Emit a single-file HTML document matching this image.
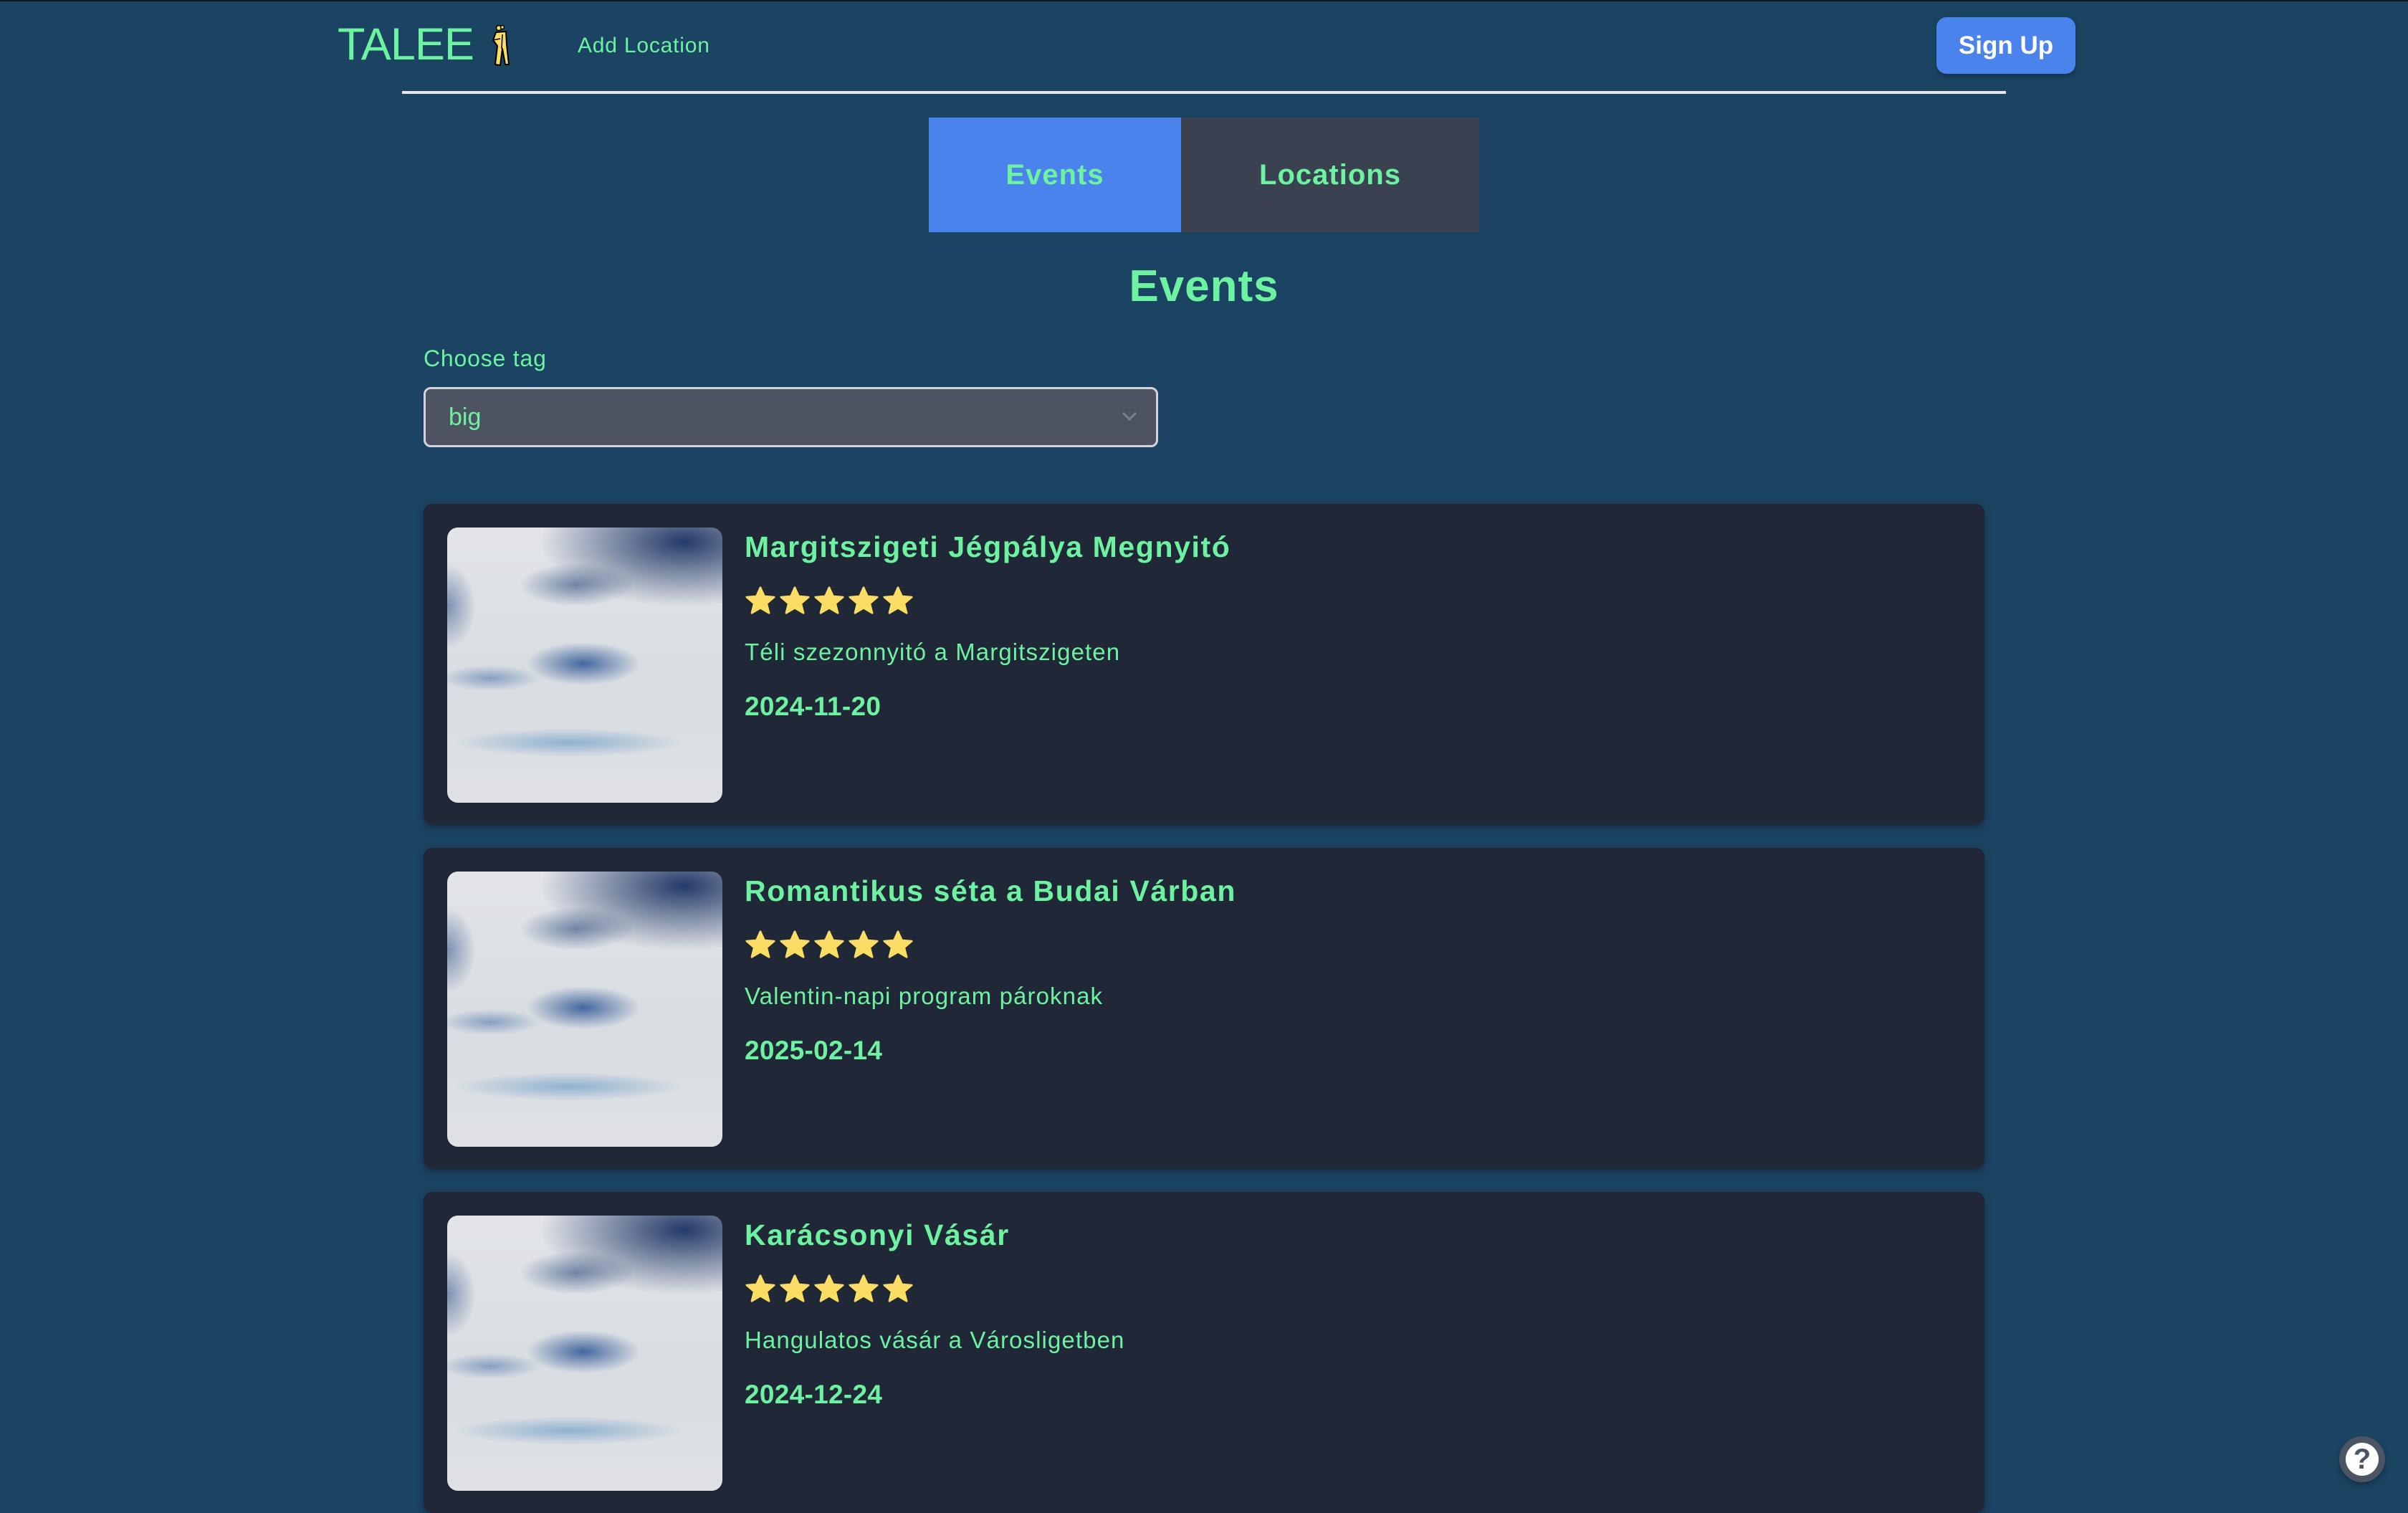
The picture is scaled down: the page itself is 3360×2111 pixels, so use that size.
<!DOCTYPE html>
<html><head><meta charset="utf-8"><style>
*{margin:0;padding:0;box-sizing:border-box}
body{width:3360px;height:2100px;background:#1b4463;font-family:"Liberation Sans",sans-serif;color:#6cf2a0;position:relative;overflow:hidden}
.abs{position:absolute}
.top{left:0;top:0;width:3360px;height:2px;background:#0c1a26}
.logo{left:471px;top:24px;font-size:63px;letter-spacing:-1px;line-height:76px}
.add{left:806px;top:46px;font-size:30px;letter-spacing:0.8px;line-height:36px}
.btn{left:2702px;top:24px;width:194px;height:79px;background:#4b83ec;border-radius:14px;color:#fff;font-weight:bold;font-size:35px;line-height:79px;text-align:center;box-shadow:0 4px 8px rgba(0,0,0,.25)}
.line{left:561px;top:127px;width:2238px;height:4px;background:#e5e7eb}
.tab{top:164px;height:160px;font-weight:bold;font-size:40px;letter-spacing:1px;line-height:160px;text-align:center}
h1{position:absolute;left:0;width:3360px;text-align:center;top:362px;font-size:62px;letter-spacing:1px;line-height:76px}
.lbl{left:591px;top:480px;font-size:32px;letter-spacing:0.8px;line-height:40px}
.sel{left:591px;top:540px;width:1025px;height:84px;background:#4d5360;border:3px solid #d1d5db;border-radius:10px;font-size:34px;line-height:78px;padding-left:32px}
.card{left:591px;width:2178px;height:448px;background:#202736;border-radius:12px;box-shadow:0 4px 10px rgba(0,0,0,.3)}
.img{position:absolute;left:33px;top:33px;width:384px;height:384px;border-radius:15px;overflow:hidden;
background:
radial-gradient(ellipse 80px 30px at 190px 190px,rgba(50,90,150,.9),rgba(50,90,150,0)),
radial-gradient(ellipse 70px 18px at 60px 210px,rgba(80,120,170,.6),rgba(80,120,170,0)),
radial-gradient(ellipse 160px 20px at 170px 300px,rgba(80,140,190,.55),rgba(80,140,190,0)),
radial-gradient(ellipse 200px 90px at 330px 20px,#233a68,rgba(35,58,104,0)),
radial-gradient(ellipse 80px 30px at 180px 80px,rgba(40,70,120,.6),rgba(40,70,120,0)),
radial-gradient(ellipse 40px 60px at 0px 110px,rgba(60,90,140,.6),rgba(60,90,140,0)),
linear-gradient(#e2e4e8,#d8dde2 60%,#dfe1e4)}
.t{position:absolute;left:448px;top:34px;font-weight:bold;font-size:41px;letter-spacing:1.6px;line-height:52px}
.stars{position:absolute;left:448px;top:114px;display:flex;gap:4px}
.d{position:absolute;left:448px;top:186px;font-size:33px;letter-spacing:1.1px;line-height:42px}
.dt{position:absolute;left:448px;top:260px;font-weight:bold;font-size:37px;letter-spacing:0.3px;line-height:46px}
</style></head><body>
<div class="abs top"></div>
<div class="abs logo">TALEE</div>
<svg class="abs" style="left:684px;top:34px" width="32" height="60" viewBox="0 0 32 60"><circle cx="12" cy="5" r="3.5" fill="#fbdd63" stroke="#000" stroke-width="1.5"/><circle cx="17" cy="4" r="2.5" fill="#fbdd63" stroke="#000" stroke-width="1.5"/><path d="M8 11 L22 10 L23 28 L26 56 L21 56 L17 34 L14 57 L7 56 L10 30 L4 22 Z" fill="#fbdd63" stroke="#000" stroke-width="2" stroke-linejoin="round"/><path d="M17 14 L16 34 M4 22 L14 20" stroke="#000" stroke-width="1.5" fill="none"/></svg>
<div class="abs add">Add Location</div>
<div class="abs btn">Sign Up</div>
<div class="abs line"></div>
<div class="abs tab" style="left:1296px;width:352px;background:#4b83ec">Events</div>
<div class="abs tab" style="left:1648px;width:416px;background:#3a4150">Locations</div>
<h1>Events</h1>
<div class="abs lbl">Choose tag</div>
<div class="abs sel">big<svg style="position:absolute;right:26px;top:30px" width="22" height="16" viewBox="0 0 22 16"><path d="M2 3 L11 12 L20 3" stroke="#7a808c" stroke-width="3" fill="none"/></svg></div>

<div class="abs card" style="top:703px"><div class="img"></div><div class="t">Margitszigeti Jégpálya Megnyitó</div>
<div class="stars">★★★★★</div>
<div class="d">Téli szezonnyitó a Margitszigeten</div><div class="dt">2024-11-20</div></div>
<div class="abs card" style="top:1183px"><div class="img"></div><div class="t">Romantikus séta a Budai Várban</div>
<div class="stars">★★★★★</div>
<div class="d">Valentin-napi program pároknak</div><div class="dt">2025-02-14</div></div>
<div class="abs card" style="top:1663px"><div class="img"></div><div class="t">Karácsonyi Vásár</div>
<div class="stars">★★★★★</div>
<div class="d">Hangulatos vásár a Városligetben</div><div class="dt">2024-12-24</div></div>

<div class="abs" style="left:3264px;top:2004px;width:64px;height:64px;border-radius:50%;background:#4b5563;box-shadow:0 4px 8px rgba(0,0,0,.3)"><div style="position:absolute;left:9px;top:9px;width:46px;height:46px;border-radius:50%;background:#fff;color:#4b5563;font-weight:bold;font-size:40px;line-height:46px;text-align:center">?</div></div>
<script>
document.querySelectorAll('.stars').forEach(s=>{s.innerHTML='';for(let i=0;i<5;i++){s.innerHTML+='<svg width="44" height="42" viewBox="0 0 24 23"><path d="M12 1.5 L15 8.2 L22.5 8.8 L16.8 13.7 L18.6 21 L12 17.1 L5.4 21 L7.2 13.7 L1.5 8.8 L9 8.2 Z" fill="#fbdd63" stroke="#fbdd63" stroke-width="1.5" stroke-linejoin="round"/></svg>'}});
</script>
</body></html>
